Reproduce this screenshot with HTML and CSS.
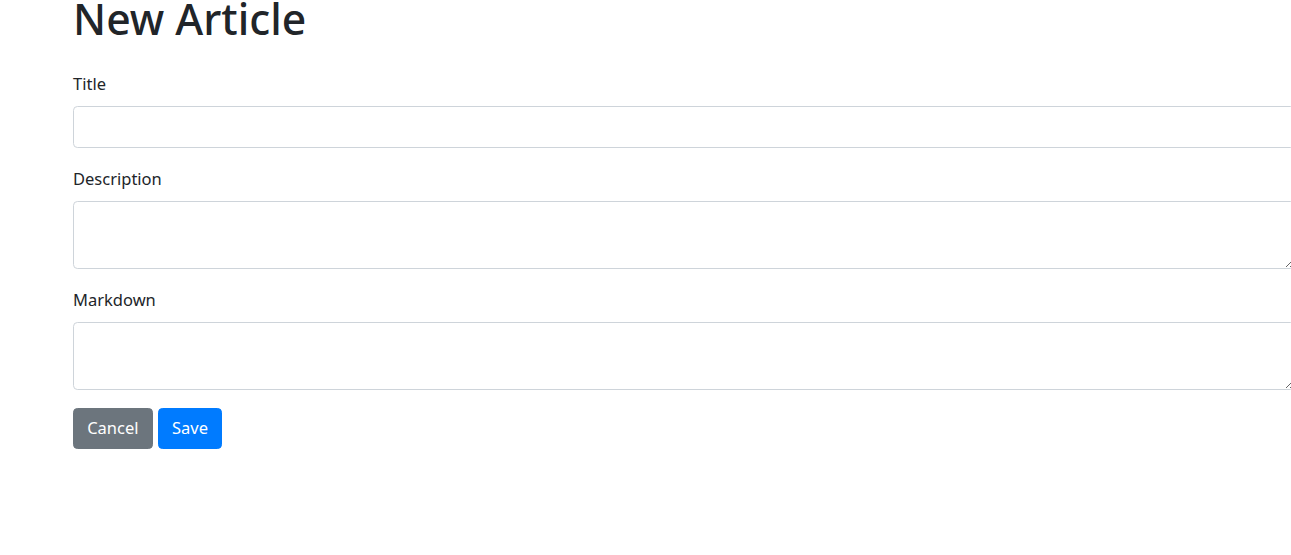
FILE: index.html
```html
<!DOCTYPE html>
<html lang="en">
<head>
<meta charset="utf-8">
<title>New Article</title>
<link rel="stylesheet" href="styles.css">
</head>
<body>
<main class="page">
  <h1 class="heading">New Article</h1>
  <form class="article-form">
    <div class="form-group">
      <label class="form-label" for="title">Title</label>
      <input class="form-control" id="title" type="text">
    </div>
    <div class="form-group">
      <label class="form-label" for="description">Description</label>
      <textarea class="form-control textarea" id="description" rows="2"></textarea>
    </div>
    <div class="form-group">
      <label class="form-label" for="markdown">Markdown</label>
      <textarea class="form-control textarea" id="markdown" rows="2"></textarea>
    </div>
    <div class="actions">
      <button type="button" class="btn btn-secondary">Cancel</button>
      <button type="submit" class="btn btn-primary">Save</button>
    </div>
  </form>
</main>
</body>
</html>
```
FILE: styles.css
```css
html, body {
  margin: 0;
  padding: 0;
  overflow: hidden;
  background: #fff;
}
body {
  font-family: "Noto Sans", "Open Sans", sans-serif;
  font-size: 16.5px;
  line-height: 1.5;
  color: #212529;
}
.page {
  padding-left: 73px;
  width: 1222px;
}
.heading {
  font-size: 42.7px;
  font-weight: 500;
  line-height: 52.8px;
  margin: -7px 0 25px;
}
.form-group {
  display: flex;
  flex-direction: column;
  margin-bottom: 17.6px;
}
.form-label {
  display: block;
  margin-bottom: 8.8px;
  line-height: 26.4px;
}
.form-control {
  display: block;
  box-sizing: border-box;
  width: 100%;
  height: 42px;
  margin: 0;
  padding: 6.6px 13.2px;
  font: inherit;
  line-height: 26.4px;
  color: #495057;
  background: #fff;
  border: 1px solid #ced4da;
  border-radius: 4.4px;
  outline: none;
}
.textarea {
  height: 68.2px;
  resize: vertical;
}
.actions {
  display: flex;
  gap: 5px;
}
.btn {
  box-sizing: border-box;
  height: 41.8px;
  padding: 6.6px 13.2px;
  font: inherit;
  line-height: 26.4px;
  color: #fff;
  border: 1px solid transparent;
  border-radius: 4.4px;
  cursor: pointer;
}
.btn-secondary {
  background: #6c757d;
  border-color: #6c757d;
}
.btn-primary {
  background: #007bff;
  border-color: #007bff;
}
```
